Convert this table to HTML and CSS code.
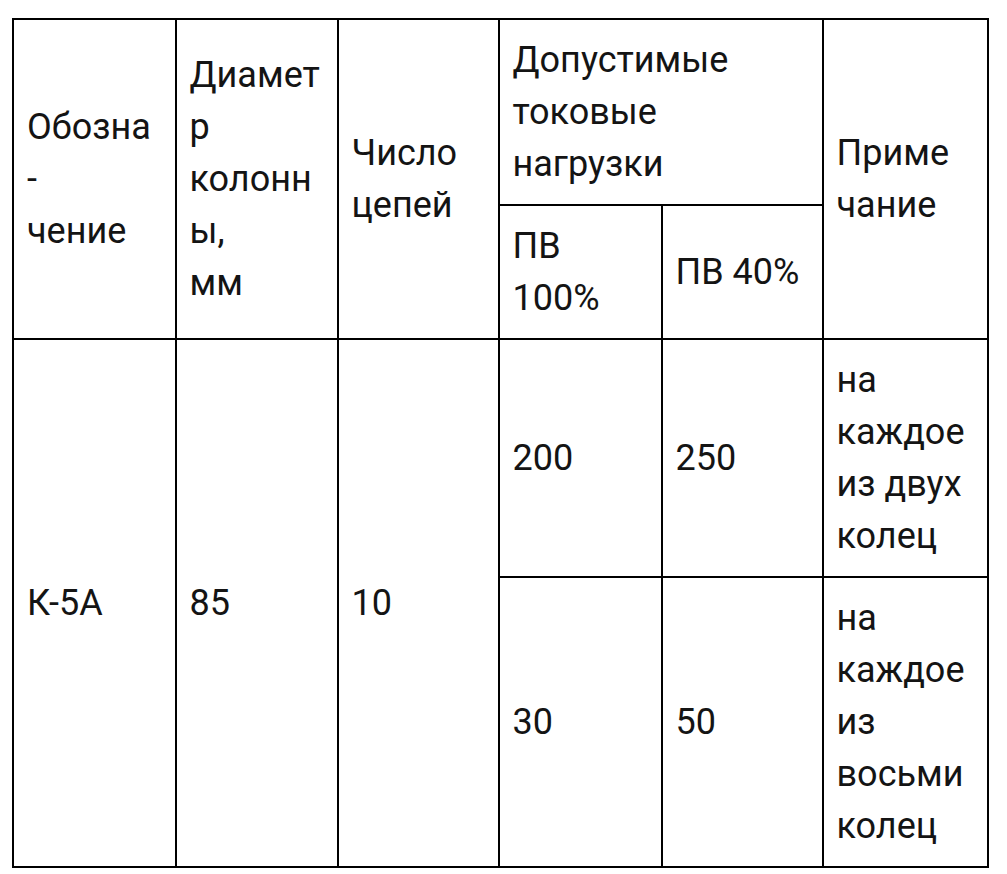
FILE: index.html
```html
<!DOCTYPE html>
<html lang="ru">
<head>
<meta charset="utf-8">
<title>Таблица</title>
<link rel="stylesheet" href="styles.css">
</head>
<body>
<table class="spec">
  <colgroup>
    <col class="c1"><col class="c2"><col class="c3"><col class="c4"><col class="c5"><col class="c6">
  </colgroup>
  <thead>
    <tr>
      <td rowspan="2">Обозна<br>-<br>чение</td>
      <td rowspan="2">Диамет<br>р<br>колонн<br>ы,<br>мм</td>
      <td rowspan="2">Число<br>цепей</td>
      <td colspan="2">Допустимые<br>токовые<br>нагрузки</td>
      <td rowspan="2">Приме<br>чание</td>
    </tr>
    <tr>
      <td>ПВ<br>100%</td>
      <td>ПВ 40%</td>
    </tr>
  </thead>
  <tbody>
    <tr>
      <td rowspan="2">К-5А</td>
      <td rowspan="2">85</td>
      <td rowspan="2">10</td>
      <td>200</td>
      <td>250</td>
      <td>на<br>каждое<br>из двух<br>колец</td>
    </tr>
    <tr>
      <td>30</td>
      <td>50</td>
      <td>на<br>каждое<br>из<br>восьми<br>колец</td>
    </tr>
  </tbody>
</table>
</body>
</html>
```

FILE: styles.css
```css
html, body {
  margin: 0;
  padding: 0;
  background: #ffffff;
}

body {
  padding: 18px 0 0 12px;
  font-family: Roboto, "Noto Sans", sans-serif;
  color: #141414;
}

.spec {
  border-collapse: collapse;
  table-layout: fixed;
  width: 975px;
  font-size: 36px;
  line-height: 52px;
}

.spec .c1 { width: 162.5px; }
.spec .c2 { width: 162px; }
.spec .c3 { width: 161px; }
.spec .c4 { width: 163px; }
.spec .c5 { width: 161px; }
.spec .c6 { width: 165.5px; }

.spec td {
  border: 2px solid #000;
  padding: 14px 10px 14px 13px;
  vertical-align: middle;
  text-align: left;
  font-weight: 400;
}
```
